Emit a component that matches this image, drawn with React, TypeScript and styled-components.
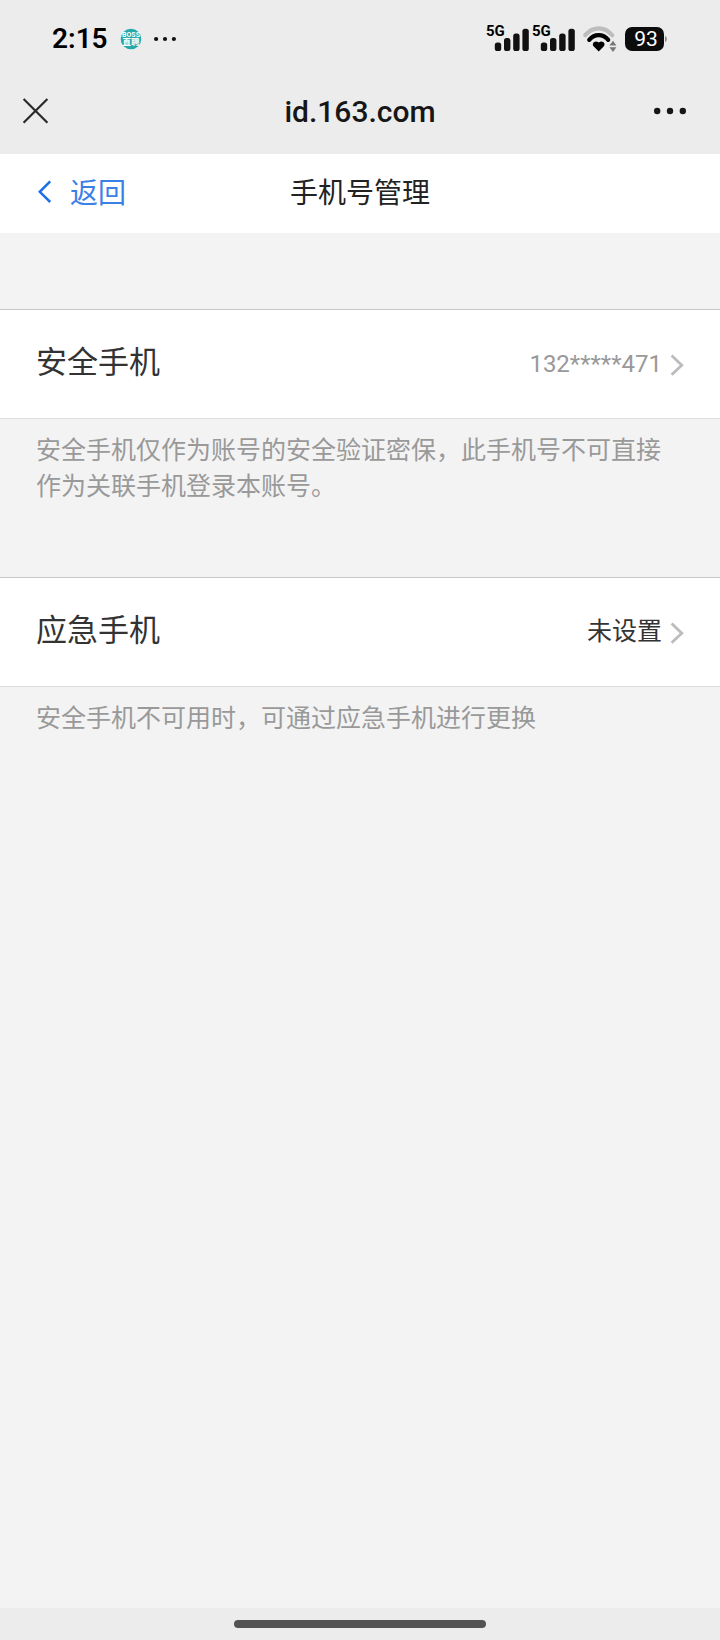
import React from "react";
import styled, { createGlobalStyle } from "styled-components";

const GlobalStyle = createGlobalStyle`
  *, *::before, *::after { box-sizing: border-box; }
  body {
    margin: 0;
    background: #f3f3f3;
    font-family: Roboto, "Noto Sans CJK SC", sans-serif;
  }
  button { border: 0; background: none; padding: 0; font: inherit; cursor: pointer; }
  svg { display: block; flex: none; overflow: visible; }
`;

const Page = styled.div`
  min-height: 100vh;
  display: flex;
  flex-direction: column;
  background: #f3f3f3;
`;

const SystemArea = styled.div`
  background: #ececec;
`;

const StatusBar = styled.div`
  height: 68px;
  padding: 10px 53px 0 52px;
  display: flex;
  align-items: center;
  justify-content: space-between;
`;

const StatusGroup = styled.div<{ $gap: number }>`
  display: flex;
  align-items: center;
  gap: ${({ $gap }) => $gap}px;
`;

const Clock = styled.time`
  font-size: 28px;
  line-height: 36px;
  font-weight: 600;
  color: #000;
`;

const TitleBar = styled.header`
  height: 86px;
  padding: 0 34px 0 22px;
  display: grid;
  grid-template-columns: 1fr auto 1fr;
  align-items: center;
`;

const SiteTitle = styled.div`
  padding: 2px 0 0 12px;
  font-size: 30px;
  line-height: 36px;
  font-weight: 500;
  color: #161616;
`;

const IconButton = styled.button<{ $end?: boolean }>`
  display: flex;
  justify-self: ${({ $end }) => ($end ? "end" : "start")};
`;

const NavBar = styled.nav`
  height: 79px;
  padding: 0 36px;
  display: grid;
  grid-template-columns: 1fr auto 1fr;
  align-items: center;
  background: #fff;
`;

const BackLink = styled.a`
  display: flex;
  align-items: center;
  gap: 16px;
  font-size: 28px;
  line-height: 40px;
  color: #3a80e6;
  text-decoration: none;
`;

const PageTitle = styled.h1`
  margin: 0;
  font-size: 28px;
  line-height: 40px;
  font-weight: 400;
  color: #222;
`;

const Main = styled.main`
  flex: 1;
  padding-top: 76px;
`;

const Section = styled.section`
  padding-bottom: 72px;
`;

const Row = styled.button`
  width: 100%;
  height: 110px;
  padding: 0 35px 0 36px;
  display: flex;
  align-items: center;
  background: #fff;
  border: solid #c8c8c8;
  border-width: 1px 0;
  border-bottom-color: #dcdcdc;
  text-align: left;
`;

const RowLabel = styled.span`
  flex: 1;
  padding-bottom: 2px;
  font-size: 31px;
  line-height: 44px;
  color: #333;
`;

const RowValue = styled.span<{ $muted?: boolean }>`
  margin-right: 7px;
  font-size: ${({ $muted }) => ($muted ? 24 : 25)}px;
  line-height: 36px;
  color: ${({ $muted }) => ($muted ? "#999" : "#333")};
`;

const Hint = styled.p`
  margin: 0;
  padding: 14px 36px 0;
  font-size: 25px;
  line-height: 36px;
  color: #999;
`;

const HomeBar = styled.footer`
  height: 32px;
  display: flex;
  align-items: center;
  justify-content: center;
  background: #ececec;
`;

const HomeIndicator = styled.div`
  width: 35%;
  height: 8px;
  border-radius: 4px;
  background: #535353;
`;

const BossIcon = () => (
  <svg width="22" height="22" viewBox="0 0 22 22" aria-hidden="true">
    <circle cx="11" cy="11" r="10.3" fill="#25a9ac" />
    <g fill="#fff" textAnchor="middle" fontWeight="700">
      <text x="11" y="8.8" fontSize="7">BOSS</text>
      <text x="11" y="17.4" fontSize="8.5">直聘</text>
    </g>
  </svg>
);

const Dots = ({ width, radius, color }: { width: number; radius: number; color: string }) => (
  <svg width={width} height="24" viewBox={`0 0 ${width} 24`} fill={color} aria-hidden="true">
    <circle cx={radius} cy="12" r={radius} />
    <circle cx={width / 2} cy="12" r={radius} />
    <circle cx={width - radius} cy="12" r={radius} />
  </svg>
);

const Signal = () => (
  <svg width="44" height="34" viewBox="0 -3 44 34" fill="#111" aria-hidden="true">
    <text x="1" y="11.4" fontSize="15" fontWeight="700" fill="#000">5G</text>
    <rect x="9.8" y="17.4" width="6.4" height="8.6" rx="2.6" />
    <rect x="19" y="13" width="6.4" height="13" rx="2.6" />
    <rect x="28.2" y="8.4" width="6.4" height="17.6" rx="2.6" />
    <rect x="37.4" y="3.8" width="6.4" height="22.2" rx="2.6" />
  </svg>
);

const Wifi = () => (
  <svg width="34" height="26" viewBox="0 0 34 26" fill="none" aria-hidden="true">
    <path d="M2.2 9.2C10 0.2 21.4 0.2 29.2 9.2" stroke="#bdbdbd" strokeWidth="4.2" strokeLinecap="round" />
    <path d="M6.2 13.8C11.6 7.6 19.8 7.6 25.2 13.8" stroke="#000" strokeWidth="4.2" strokeLinecap="round" />
    <path d="M15.7 25.4L10.8 20.6C8 17.6 12 13.6 15.7 16.6C19.4 13.6 23.4 17.6 20.6 20.6Z" fill="#000" />
    <path d="M26.4 19.6L30 14.8L33.4 19.6ZM26.4 21.2L30 26L33.4 21.2Z" fill="#777" />
  </svg>
);

const Battery = () => (
  <svg width="42" height="24" viewBox="0 0 42 24" aria-hidden="true">
    <rect width="39" height="24" rx="7" fill="#0c0c0c" />
    <path d="M40 9C42.4 9.6 42.4 14.4 40 15Z" fill="#888" />
    <text x="21" y="19.4" fontSize="21" textAnchor="middle" fill="#fff">93</text>
  </svg>
);

const CloseIcon = () => (
  <svg width="28" height="28" viewBox="0 0 28 28" fill="none" aria-hidden="true">
    <path d="M1.6 2L25.4 25.8M25.4 2L1.6 25.8" stroke="#2a2a2a" strokeWidth="2.2" />
  </svg>
);

const BackIcon = () => (
  <svg width="18" height="28" viewBox="0 0 18 28" fill="none" aria-hidden="true">
    <path d="M14.2 1.4L3.8 11.8L14.2 22" stroke="#1a70e8" strokeWidth="2.5" />
  </svg>
);

const ChevronIcon = () => (
  <svg width="16" height="24" viewBox="0 0 16 24" fill="none" aria-hidden="true">
    <path d="M2.6 3.6L12.8 13.2L2.6 22.8" stroke="#bcbcbc" strokeWidth="2.8" />
  </svg>
);

interface PhoneEntry {
  label: string;
  value: string;
  muted?: boolean;
  hint: string;
}

const entries: PhoneEntry[] = [
  {
    label: "安全手机",
    value: "132*****471",
    muted: true,
    hint: "安全手机仅作为账号的安全验证密保，此手机号不可直接作为关联手机登录本账号。",
  },
  { label: "应急手机", value: "未设置", hint: "安全手机不可用时，可通过应急手机进行更换" },
];

export default function App() {
  return (
    <Page lang="zh-CN">
      <GlobalStyle />
      <SystemArea>
        <StatusBar>
          <StatusGroup $gap={12}>
            <Clock>2:15</Clock>
            <BossIcon />
            <Dots width={22} radius={2.1} color="#111" />
          </StatusGroup>
          <StatusGroup $gap={8}>
            <StatusGroup $gap={2}>
              <Signal />
              <Signal />
            </StatusGroup>
            <Wifi />
            <Battery />
          </StatusGroup>
        </StatusBar>
        <TitleBar>
          <IconButton aria-label="关闭">
            <CloseIcon />
          </IconButton>
          <SiteTitle>id.163.com</SiteTitle>
          <IconButton aria-label="更多" $end>
            <Dots width={32} radius={3.2} color="#161616" />
          </IconButton>
        </TitleBar>
      </SystemArea>
      <NavBar>
        <BackLink href="#">
          <BackIcon />
          返回
        </BackLink>
        <PageTitle>手机号管理</PageTitle>
      </NavBar>
      <Main>
        {entries.map((entry) => (
          <Section key={entry.label}>
            <Row>
              <RowLabel>{entry.label}</RowLabel>
              <RowValue $muted={entry.muted}>{entry.value}</RowValue>
              <ChevronIcon />
            </Row>
            <Hint>{entry.hint}</Hint>
          </Section>
        ))}
      </Main>
      <HomeBar>
        <HomeIndicator />
      </HomeBar>
    </Page>
  );
}
